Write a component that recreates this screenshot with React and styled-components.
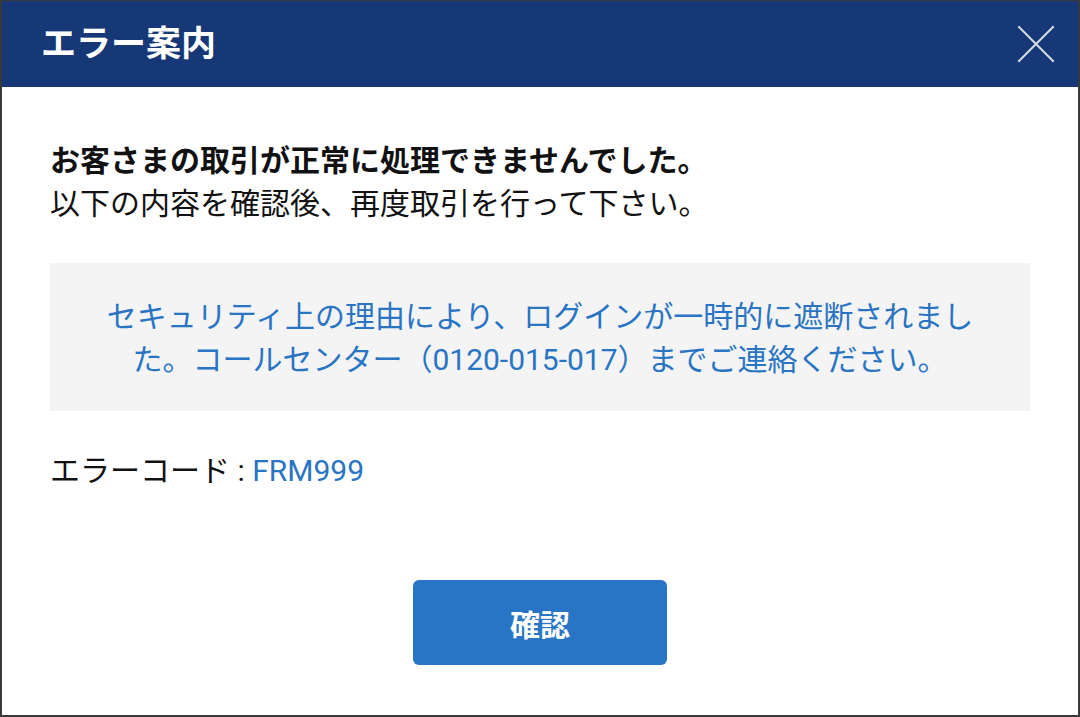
import React from "react";
import styled, { createGlobalStyle } from "styled-components";

const GlobalStyle = createGlobalStyle`
  html, body {
    margin: 0;
    padding: 0;
    background: #ffffff;
  }
  body {
    font-family: Roboto, "Noto Sans CJK JP", "Noto Sans", sans-serif;
  }
  * { box-sizing: border-box; }
`;

const Dialog = styled.div`
  width: 1080px;
  height: 717px;
  display: flex;
  flex-direction: column;
  background: #ffffff;
  border: 2px solid #3a3a3a;
  border-top-width: 1px;
`;

const Header = styled.header`
  height: 86px;
  flex: 0 0 auto;
  display: flex;
  align-items: center;
  justify-content: space-between;
  padding: 0 22px 0 39px;
  background: #173876;
`;

const Title = styled.h1`
  margin: 0;
  color: #ffffff;
  font-size: 35px;
  font-weight: 700;
  line-height: 1;
  letter-spacing: 0;
`;

const CloseButton = styled.button`
  width: 40px;
  height: 40px;
  padding: 0;
  border: none;
  background: transparent;
  display: flex;
  align-items: center;
  justify-content: center;
  cursor: pointer;
`;

const Body = styled.main`
  flex: 1 1 auto;
  display: flex;
  flex-direction: column;
  padding: 52px 48px 0;
`;

const Lead = styled.p`
  margin: 0;
  font-size: 30px;
  line-height: 43px;
  color: #111111;
  font-weight: ${(p) => (p.$bold ? 700 : 400)};
`;

const Notice = styled.div`
  margin-top: 38px;
  padding: 32px 48px 30px;
  background: #f4f4f4;
  color: #2a74c4;
  font-size: 30px;
  line-height: 43px;
  text-align: center;
`;

const CodeLine = styled.p`
  margin: 38px 0 0;
  font-size: 30px;
  line-height: 43px;
  color: #111111;
`;

const Code = styled.span`
  color: #2a74c4;
`;

const Actions = styled.div`
  margin-top: 88px;
  display: flex;
  justify-content: center;
`;

const ConfirmButton = styled.button`
  width: 254px;
  height: 85px;
  border: none;
  border-radius: 6px;
  background: #2874c5;
  color: #ffffff;
  font-family: inherit;
  font-size: 30px;
  font-weight: 700;
  cursor: pointer;
`;

const CloseIcon = () => (
  <svg width="38" height="38" viewBox="0 0 38 38" aria-hidden="true">
    <path
      d="M2 2 L36 36 M36 2 L2 36"
      stroke="#d6dbe4"
      strokeWidth="2"
      strokeLinecap="square"
      fill="none"
    />
  </svg>
);

export default function App() {
  return (
    <>
      <GlobalStyle />
      <Dialog>
        <Header>
          <Title>エラー案内</Title>
          <CloseButton aria-label="閉じる">
            <CloseIcon />
          </CloseButton>
        </Header>
        <Body>
          <Lead $bold>お客さまの取引が正常に処理できませんでした。</Lead>
          <Lead>以下の内容を確認後、再度取引を行って下さい。</Lead>
          <Notice>
            セキュリティ上の理由により、ログインが一時的に遮断されました。コールセンター（0120-015-017）までご連絡ください。
          </Notice>
          <CodeLine>
            エラーコード : <Code>FRM999</Code>
          </CodeLine>
          <Actions>
            <ConfirmButton>確認</ConfirmButton>
          </Actions>
        </Body>
      </Dialog>
    </>
  );
}
